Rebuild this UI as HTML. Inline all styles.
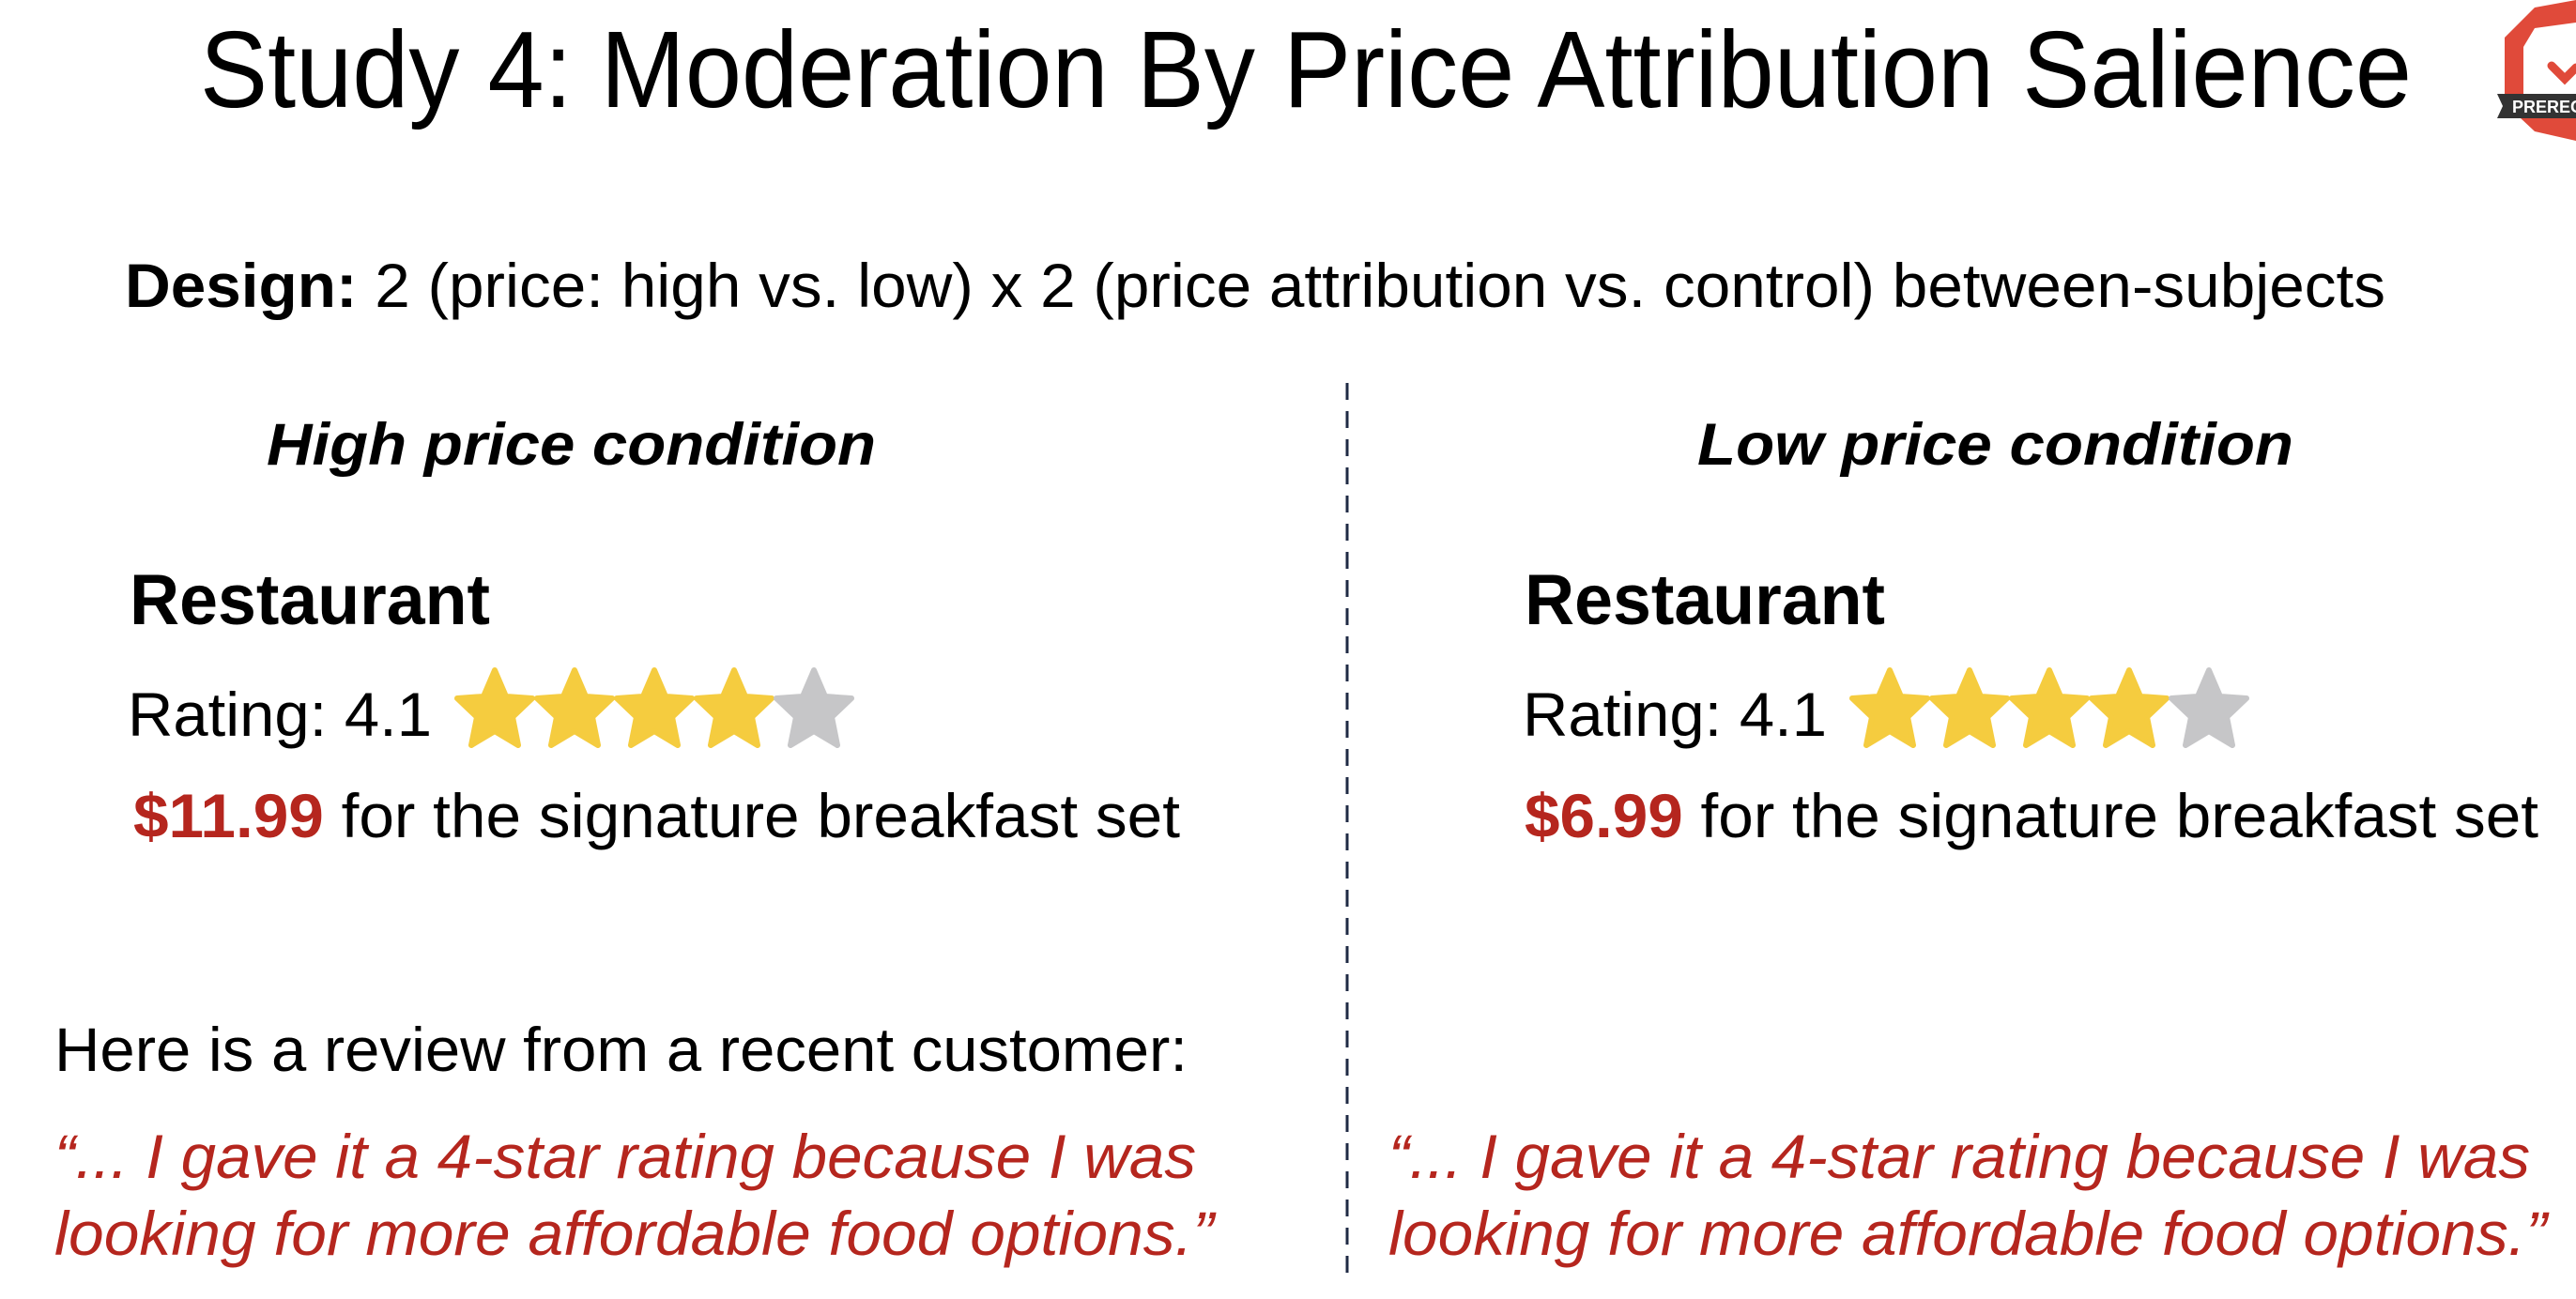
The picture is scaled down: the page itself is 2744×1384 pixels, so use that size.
<!DOCTYPE html>
<html><head><meta charset="utf-8"><style>
html,body{margin:0;padding:0;background:#fff;width:2744px;height:1384px;overflow:hidden}
svg{display:block}
text{font-family:"Liberation Sans",Arial,sans-serif}
</style></head><body>
<svg width="2744" height="1384" viewBox="0 0 2744 1384" xmlns="http://www.w3.org/2000/svg">
<defs>
<path id="st" d="M0,-42 L12,-14 L40,-12 L19,8 L25,38 L0,23 L-25,38 L-19,8 L-40,-12 L-12,-14 Z" stroke-linejoin="round" stroke-width="6"/>
</defs>
<text x="213" y="114" font-size="116" fill="#000" textLength="2356" lengthAdjust="spacingAndGlyphs">Study 4: Moderation By Price Attribution Salience</text>
<g>
<path d="M2700,8 L2744,0 L2744,150 L2700,140 L2668,110 L2668,40 Z" fill="#e04a3a"/>
<path d="M2700,30 L2744,24 L2744,125 L2705,118 L2688,100 L2688,50 Z" fill="#fff"/>
<path d="M2718,70 L2732,84 L2744,72" stroke="#e04a3a" stroke-width="9" fill="none" stroke-linecap="round"/>
<path d="M2660,100 L2744,100 L2744,126 L2660,126 L2666,113 Z" fill="#333"/>
<text x="2676" y="120" font-size="18" font-weight="bold" fill="#fff">PREREG</text>
</g>
<text x="133" y="327" font-size="66" fill="#000" textLength="2408" lengthAdjust="spacingAndGlyphs"><tspan font-weight="bold">Design:</tspan> 2 (price: high vs. low) x 2 (price attribution vs. control) between-subjects</text>
<text x="284" y="495" font-size="63" font-weight="bold" font-style="italic" textLength="649" lengthAdjust="spacingAndGlyphs">High price condition</text>
<text x="1808" y="495" font-size="63" font-weight="bold" font-style="italic" textLength="635" lengthAdjust="spacingAndGlyphs">Low price condition</text>
<line x1="1435" y1="408" x2="1435" y2="1356" stroke="#1f2a44" stroke-width="3" stroke-dasharray="18,12"/>
<text x="138" y="665" font-size="76" font-weight="bold" textLength="384" lengthAdjust="spacingAndGlyphs">Restaurant</text>
<text x="1624" y="665" font-size="76" font-weight="bold" textLength="384" lengthAdjust="spacingAndGlyphs">Restaurant</text>
<text x="136" y="784" font-size="66" textLength="324" lengthAdjust="spacingAndGlyphs">Rating: 4.1</text>
<text x="1622" y="784" font-size="66" textLength="324" lengthAdjust="spacingAndGlyphs">Rating: 4.1</text>
<g fill="#f5cc3f" stroke="#f5cc3f">
<use href="#st" x="527" y="756"/><use href="#st" x="612" y="756"/><use href="#st" x="697" y="756"/><use href="#st" x="782" y="756"/>
<use href="#st" x="2013" y="756"/><use href="#st" x="2098" y="756"/><use href="#st" x="2183" y="756"/><use href="#st" x="2268" y="756"/>
</g>
<g fill="#c6c6c8" stroke="#c6c6c8"><use href="#st" x="867" y="756"/><use href="#st" x="2353" y="756"/></g>
<text x="142" y="892" font-size="66" textLength="1115" lengthAdjust="spacingAndGlyphs"><tspan fill="#b5261e" font-weight="bold">$11.99</tspan> for the signature breakfast set</text>
<text x="1624" y="892" font-size="66" textLength="1080" lengthAdjust="spacingAndGlyphs"><tspan fill="#b5261e" font-weight="bold">$6.99</tspan> for the signature breakfast set</text>
<text x="58" y="1141" font-size="66" textLength="1207" lengthAdjust="spacingAndGlyphs">Here is a review from a recent customer:</text>
<g fill="#b5261e" font-style="italic" font-size="66">
<text x="58" y="1255" textLength="1216" lengthAdjust="spacingAndGlyphs">“... I gave it a 4-star rating because I was</text>
<text x="58" y="1337" textLength="1235" lengthAdjust="spacingAndGlyphs">looking for more affordable food options.”</text>
<text x="1479" y="1255" textLength="1216" lengthAdjust="spacingAndGlyphs">“... I gave it a 4-star rating because I was</text>
<text x="1479" y="1337" textLength="1234" lengthAdjust="spacingAndGlyphs">looking for more affordable food options.”</text>
</g>
</svg>
</body></html>
